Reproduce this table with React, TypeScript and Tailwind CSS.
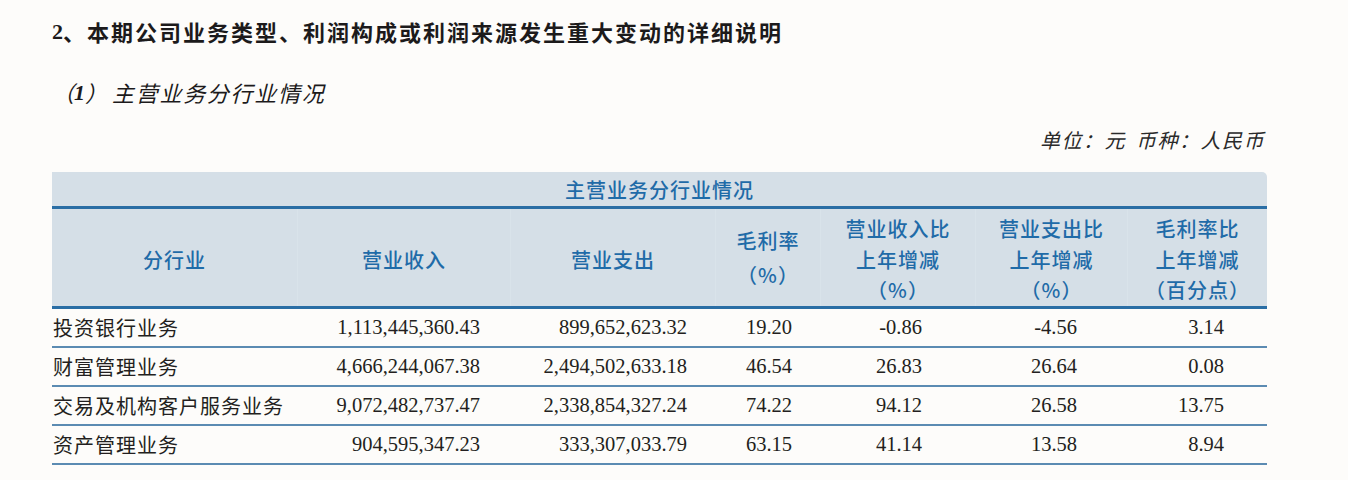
import React from 'react';

// column widths measured from the report table
const cols = 'grid grid-cols-[245px_213px_205px_105px_155px_152px_140px]';

const rows = [
  ['投资银行业务', '1,113,445,360.43', '899,652,623.32', '19.20', '-0.86', '-4.56', '3.14'],
  ['财富管理业务', '4,666,244,067.38', '2,494,502,633.18', '46.54', '26.83', '26.64', '0.08'],
  ['交易及机构客户服务业务', '9,072,482,737.47', '2,338,854,327.24', '74.22', '94.12', '26.58', '13.75'],
  ['资产管理业务', '904,595,347.23', '333,307,033.79', '63.15', '41.14', '13.58', '8.94'],
];

// right padding per numeric column so the figures line up like the source
const numPad = ['pr-[30px]', 'pr-[28px]', 'pr-[28px]', 'pr-[53px]', 'pr-[50px]', 'pr-[43px]'];

const cjk = "font-['Noto_Sans_CJK_SC',sans-serif]";
const serif = "font-['Liberation_Serif','Noto_Sans_CJK_SC',serif]";

const HeadCell: React.FC<{ lines: string[]; first?: boolean }> = ({ lines, first }) => (
  <div
    className={`flex flex-col items-center justify-center pt-[5px] leading-[30.5px] ${
      first ? '' : 'border-l border-[#d9e3ea]'
    }`}
  >
    {lines.map((l) => (
      <span key={l}>{l}</span>
    ))}
  </div>
);

export default function App() {
  return (
    <div className={`w-full h-[480px] bg-[#fdfcfa] pl-[52px] pr-[81px] text-[#1c1a1b] ${cjk}`}>
      {/* section heading */}
      <div className="h-[62px] flex items-center text-[22px] tracking-[2px] font-semibold">
        <span className={`${serif} font-bold tracking-normal`}>2</span>
        <span>、本期公司业务类型、利润构成或利润来源发生重大变动的详细说明</span>
      </div>

      {/* sub heading */}
      <div className="h-[60px] flex items-center text-[22px] tracking-[1.7px] italic">
        <span className="tracking-normal">（</span>
        <span className={`${serif} font-bold tracking-normal`}>1</span>
        <span className="tracking-normal mr-[5px]">）</span>
        <span>主营业务分行业情况</span>
      </div>

      {/* unit */}
      <div className="h-[36px] flex items-center justify-end text-[20px] tracking-[1.5px] italic text-[#2a2a2a] pr-[2px]">
        <span>单位：元</span>
        <span className="ml-[10px]">币种：人民币</span>
      </div>

      {/* table */}
      <div className="mt-[14px] w-[1215px]">
        <div className="bg-[#d5dfe7] rounded-tr-[5px] text-[#1f6ba8] text-[20px] tracking-[1px] font-medium">
          <div className="h-[37px] border-b-[3px] border-[#2a6ea5] flex items-center justify-center pt-[2px]">
            主营业务分行业情况
          </div>
          <div className={`${cols} h-[100px] border-b-[3px] border-[#2a6ea5]`}>
            <HeadCell first lines={['分行业']} />
            <HeadCell lines={['营业收入']} />
            <HeadCell lines={['营业支出']} />
            <div className="flex flex-col items-center justify-center border-l border-[#d9e3ea] leading-[34px]">
              <span>毛利率</span>
              <span>（%）</span>
            </div>
            <HeadCell lines={['营业收入比', '上年增减', '（%）']} />
            <HeadCell lines={['营业支出比', '上年增减', '（%）']} />
            <HeadCell lines={['毛利率比', '上年增减', '（百分点）']} />
          </div>
        </div>

        {rows.map((r) => (
          <div key={r[0]} className={`${cols} h-[39px] border-b-2 border-[#5b8bb2]`}>
            <div className="flex items-center pl-[1px] text-[20px] tracking-[1px] text-[#231f20]">{r[0]}</div>
            {r.slice(1).map((v, i) => (
              <div
                key={i}
                className={`flex items-center justify-end ${numPad[i]} ${serif} text-[20.5px] text-[#231f20]`}
              >
                {v}
              </div>
            ))}
          </div>
        ))}
      </div>
    </div>
  );
}
